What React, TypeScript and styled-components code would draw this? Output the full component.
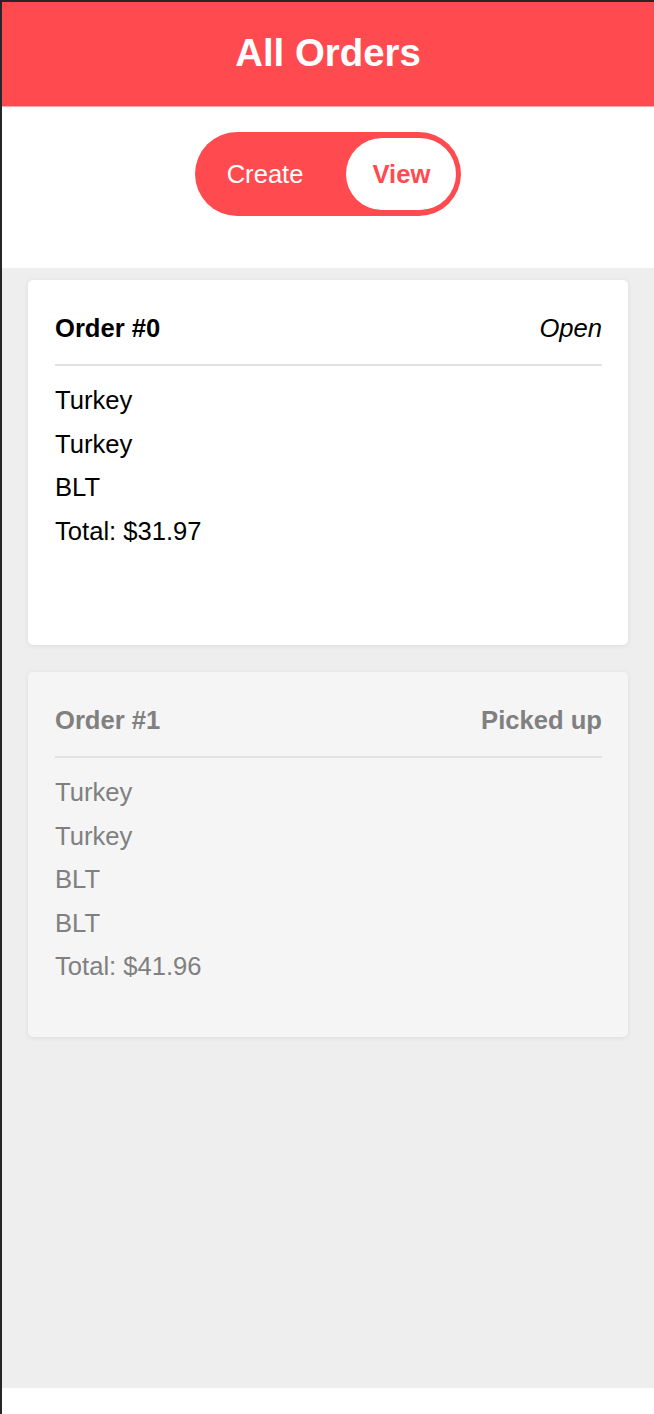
import styled, { createGlobalStyle } from "styled-components";

type Order = {
    id: number;
    items: string[];
    total: string;
    status: string;
    pickedUp: boolean;
};

const orders: Order[] = [
    { id: 0, items: ["Turkey", "Turkey", "BLT"], total: "31.97", status: "Open", pickedUp: false },
    { id: 1, items: ["Turkey", "Turkey", "BLT", "BLT"], total: "41.96", status: "Picked up", pickedUp: true },
];

const GlobalStyle = createGlobalStyle`
    html, body {
        margin: 0;
        padding: 0;
        background: #ffffff;
    }
    * {
        box-sizing: border-box;
    }
`;

export default function App() {
    return (
        <>
            <GlobalStyle />
            <Page>
                <TitleBar>All Orders</TitleBar>
                <ToggleArea>
                    <Toggle>
                        <ToggleButton>Create</ToggleButton>
                        <ToggleButton active>View</ToggleButton>
                    </Toggle>
                </ToggleArea>
                <OrdersList>
                    {orders.map((order) => (
                        <OrderCard key={order.id} muted={order.pickedUp}>
                            <OrderHeader>
                                <OrderTitle>Order #{order.id}</OrderTitle>
                                <OrderStatus muted={order.pickedUp}>{order.status}</OrderStatus>
                            </OrderHeader>
                            <ItemList>
                                {order.items.map((item, i) => (
                                    <Item key={i}>{item}</Item>
                                ))}
                                <Item>Total: ${order.total}</Item>
                            </ItemList>
                        </OrderCard>
                    ))}
                </OrdersList>
                <Footer />
            </Page>
        </>
    );
}

const Page = styled.div`
    height: 1414px;
    display: flex;
    flex-direction: column;
    border-top: 2px solid #262626;
    border-left: 2px solid #262626;
    font-family: "Liberation Sans", Arial, sans-serif;
    background: #ffffff;
`;

const TitleBar = styled.div`
    height: 105px;
    background: #ff4b50;
    border-bottom: 1px solid #ffa9ab;
    color: white;
    font-size: 38.4px;
    font-weight: bold;
    display: flex;
    align-items: center;
    justify-content: center;
    padding-bottom: 2px;
`;

const ToggleArea = styled.div`
    display: flex;
    justify-content: center;
    padding: 25px 0 52px;
`;

const Toggle = styled.div`
    display: flex;
    align-items: center;
    gap: 17px;
    height: 84px;
    padding: 0 5px 0 6px;
    border-radius: 42px;
    background: #ff4b50;
`;

const ToggleButton = styled.div<{ active?: boolean }>`
    height: 72px;
    padding: 0 26px;
    border-radius: 36px;
    display: flex;
    align-items: center;
    font-size: 25.6px;
    font-weight: ${(p) => (p.active ? "bold" : "normal")};
    background: ${(p) => (p.active ? "#ffffff" : "transparent")};
    color: ${(p) => (p.active ? "#ff4b50" : "#ffffff")};
`;

const OrdersList = styled.div`
    flex: 1;
    background: #eeeeee;
    padding: 12px 26px 0;
    display: flex;
    flex-direction: column;
    gap: 27px;
`;

const OrderCard = styled.div<{ muted: boolean }>`
    height: 365px;
    padding: 13px 26px 0 27px;
    border-radius: 5px;
    background: ${(p) => (p.muted ? "#f5f5f5" : "#ffffff")};
    color: ${(p) => (p.muted ? "#808080" : "#000000")};
    box-shadow: 0 1px 5px rgba(0, 0, 0, 0.08);
`;

const OrderHeader = styled.div`
    height: 73px;
    display: flex;
    align-items: center;
    justify-content: space-between;
    border-bottom: 2px solid #e2e2e2;
    padding-bottom: 1px;
    font-size: 25.6px;
`;

const OrderTitle = styled.span`
    font-weight: bold;
`;

const OrderStatus = styled.span<{ muted: boolean }>`
    font-weight: ${(p) => (p.muted ? "bold" : "normal")};
    font-style: ${(p) => (p.muted ? "normal" : "italic")};
`;

const ItemList = styled.div`
    padding-top: 13px;
    display: flex;
    flex-direction: column;
`;

const Item = styled.div`
    font-size: 25.6px;
    line-height: 43.5px;
`;

const Footer = styled.div`
    height: 26px;
    background: #ffffff;
`;
